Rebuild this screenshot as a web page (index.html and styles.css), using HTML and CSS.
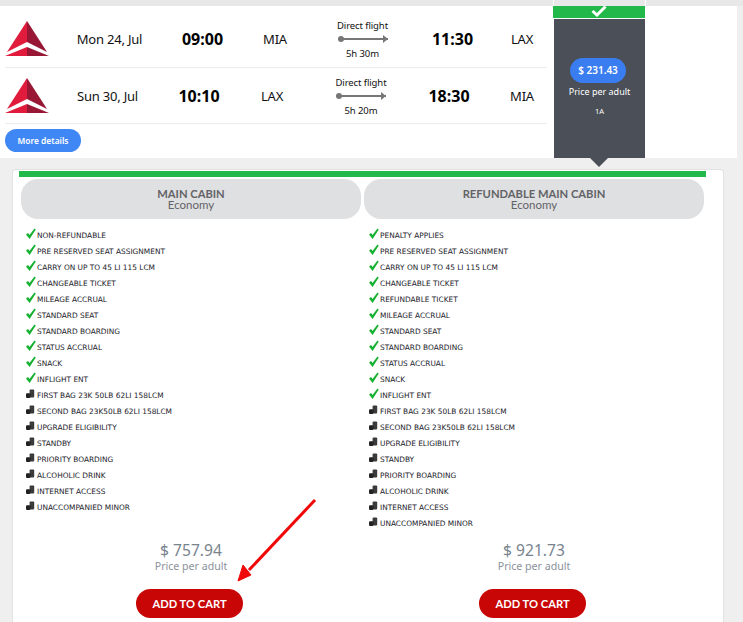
FILE: index.html
```html
<!DOCTYPE html>
<html lang="en">
<head>
    <meta charset="UTF-8">
    <meta name="viewport" content="width=device-width, initial-scale=1.0">
    <title>Select fare</title>
    <link rel="stylesheet" href="styles.css">
</head>
<body>
    <svg class="icon-defs" width="0" height="0">
        <symbol id="delta" viewBox="0 0 44 35">
            <path d="M22 0 L22 21 L2 31 Z" fill="#e01b3c"/>
            <path d="M22 0 L22 21 L42 31 Z" fill="#981735"/>
            <path d="M22 26 L22 35 L0 35 Z" fill="#e01b3c"/>
            <path d="M22 26 L22 35 L44 35 Z" fill="#981735"/>
        </symbol>
        <symbol id="check" viewBox="0 0 11 12">
            <path d="M1 6.5 L3 5 L4.5 7 L9.5 0.5 L10.8 1.6 L4.6 11 Z" fill="#14b02f"/>
        </symbol>
        <symbol id="bag" viewBox="0 0 11 12">
            <rect x="4.6" y="1.5" width="4.6" height="8" rx="1" fill="#3a3a3a"/>
            <rect x="1" y="5.2" width="4.4" height="4.8" rx="1" fill="#222"/>
        </symbol>
    </svg>

    <div class="top-strip"></div>

    <section class="results">
        <div class="flights">
            <div class="flight-row">
                <svg class="airline-logo"><use href="#delta"/></svg>
                <span class="flight-date">Mon 24, Jul</span>
                <strong class="flight-time">09:00</strong>
                <span class="flight-airport">MIA</span>
                <div class="flight-route">
                    <span>Direct flight</span>
                    <div class="route-line"></div>
                    <span>5h 30m</span>
                </div>
                <strong class="flight-time">11:30</strong>
                <span class="flight-airport last">LAX</span>
            </div>
            <div class="flight-row short">
                <svg class="airline-logo"><use href="#delta"/></svg>
                <span class="flight-date">Sun 30, Jul</span>
                <strong class="flight-time">10:10</strong>
                <span class="flight-airport">LAX</span>
                <div class="flight-route">
                    <span>Direct flight</span>
                    <div class="route-line"></div>
                    <span>5h 20m</span>
                </div>
                <strong class="flight-time">18:30</strong>
                <span class="flight-airport last">MIA</span>
            </div>
            <a href="#" class="details-btn">More details</a>
        </div>

        <div class="price-col">
            <div class="price-check">
                <svg width="16" height="12" viewBox="0 0 16 12"><path d="M1.5 6 L6 10 L14.5 1.5" fill="none" stroke="#fff" stroke-width="3"/></svg>
            </div>
            <div class="price-body">
                <span class="price-pill">$ 231.43</span>
                <span class="price-note">Price per adult</span>
                <span class="price-class">1A</span>
            </div>
        </div>
    </section>

    <section class="fares-card">
        <div class="fares-bar"></div>
        <div class="fares">
            <div class="fare">
                <div class="fare-head"><b>MAIN CABIN</b><span>Economy</span></div>
                <ul class="fare-list">
                    <li><svg><use href="#check"/></svg>NON-REFUNDABLE</li>
                    <li><svg><use href="#check"/></svg>PRE RESERVED SEAT ASSIGNMENT</li>
                    <li><svg><use href="#check"/></svg>CARRY ON UP TO 45 LI 115 LCM</li>
                    <li><svg><use href="#check"/></svg>CHANGEABLE TICKET</li>
                    <li><svg><use href="#check"/></svg>MILEAGE ACCRUAL</li>
                    <li><svg><use href="#check"/></svg>STANDARD SEAT</li>
                    <li><svg><use href="#check"/></svg>STANDARD BOARDING</li>
                    <li><svg><use href="#check"/></svg>STATUS ACCRUAL</li>
                    <li><svg><use href="#check"/></svg>SNACK</li>
                    <li><svg><use href="#check"/></svg>INFLIGHT ENT</li>
                    <li><svg><use href="#bag"/></svg>FIRST BAG 23K 50LB 62LI 158LCM</li>
                    <li><svg><use href="#bag"/></svg>SECOND BAG 23K50LB 62LI 158LCM</li>
                    <li><svg><use href="#bag"/></svg>UPGRADE ELIGIBILITY</li>
                    <li><svg><use href="#bag"/></svg>STANDBY</li>
                    <li><svg><use href="#bag"/></svg>PRIORITY BOARDING</li>
                    <li><svg><use href="#bag"/></svg>ALCOHOLIC DRINK</li>
                    <li><svg><use href="#bag"/></svg>INTERNET ACCESS</li>
                    <li><svg><use href="#bag"/></svg>UNACCOMPANIED MINOR</li>
                </ul>
                <div class="fare-price">$ 757.94</div>
                <div class="fare-note">Price per adult</div>
                <button class="cart-btn">ADD TO CART</button>
            </div>
            <div class="fare">
                <div class="fare-head"><b>REFUNDABLE MAIN CABIN</b><span>Economy</span></div>
                <ul class="fare-list">
                    <li><svg><use href="#check"/></svg>PENALTY APPLIES</li>
                    <li><svg><use href="#check"/></svg>PRE RESERVED SEAT ASSIGNMENT</li>
                    <li><svg><use href="#check"/></svg>CARRY ON UP TO 45 LI 115 LCM</li>
                    <li><svg><use href="#check"/></svg>CHANGEABLE TICKET</li>
                    <li><svg><use href="#check"/></svg>REFUNDABLE TICKET</li>
                    <li><svg><use href="#check"/></svg>MILEAGE ACCRUAL</li>
                    <li><svg><use href="#check"/></svg>STANDARD SEAT</li>
                    <li><svg><use href="#check"/></svg>STANDARD BOARDING</li>
                    <li><svg><use href="#check"/></svg>STATUS ACCRUAL</li>
                    <li><svg><use href="#check"/></svg>SNACK</li>
                    <li><svg><use href="#check"/></svg>INFLIGHT ENT</li>
                    <li><svg><use href="#bag"/></svg>FIRST BAG 23K 50LB 62LI 158LCM</li>
                    <li><svg><use href="#bag"/></svg>SECOND BAG 23K50LB 62LI 158LCM</li>
                    <li><svg><use href="#bag"/></svg>UPGRADE ELIGIBILITY</li>
                    <li><svg><use href="#bag"/></svg>STANDBY</li>
                    <li><svg><use href="#bag"/></svg>PRIORITY BOARDING</li>
                    <li><svg><use href="#bag"/></svg>ALCOHOLIC DRINK</li>
                    <li><svg><use href="#bag"/></svg>INTERNET ACCESS</li>
                    <li><svg><use href="#bag"/></svg>UNACCOMPANIED MINOR</li>
                </ul>
                <div class="fare-price">$ 921.73</div>
                <div class="fare-note">Price per adult</div>
                <button class="cart-btn">ADD TO CART</button>
            </div>
        </div>
    </section>

    <!-- annotation drawn over the screenshot -->
    <svg class="annotation" width="100" height="100" viewBox="0 0 100 100">
        <path d="M85 2 L19 72" stroke="#f00808" stroke-width="3" fill="none"/>
        <path d="M8 83 L13 67 L21 77 Z" fill="#f00808" stroke="#f00808" stroke-width="1"/>
    </svg>
</body>
</html>
```

FILE: styles.css
```css
* {
    margin: 0;
    padding: 0;
    box-sizing: border-box;
}

html, body {
    height: 622px;
    overflow: hidden;
}

body {
    position: relative;
    background: #efefef;
    font-family: 'Noto Sans', sans-serif;
    color: #111;
}

.icon-defs {
    position: absolute;
}

.top-strip {
    height: 6px;
    margin-bottom: -6px;
    background: #e8e8e8;
}

.results {
    display: flex;
    align-items: flex-start;
    width: 737px;
    height: 152px;
    margin-top: 6px;
    padding-left: 5px;
    background: #fff;
}

.flights {
    width: 542px;
}

.flight-row {
    display: grid;
    grid-template-columns: 57px 95px 91px 54px 121px 59px 1fr;
    align-items: center;
    height: 62px;
    padding-top: 4px;
    border-bottom: 1px solid #ececec;
    text-align: center;
    font-size: 13px;
    letter-spacing: -0.2px;
}

.flight-row.short {
    grid-template-columns: 57px 91px 92px 54px 124px 52px 1fr;
    height: 56px;
    padding-top: 0;
}

.airline-logo {
    width: 44px;
    height: 35px;
}

.flight-time {
    font-size: 16px;
    font-weight: 700;
    letter-spacing: 0;
    color: #000;
}

.flight-airport.last {
    padding-left: 15px;
}

.short .flight-airport.last {
    padding-left: 22px;
}

.flight-route {
    display: flex;
    flex-direction: column;
    align-items: center;
    gap: 5px;
    font-size: 9.5px;
    letter-spacing: -0.1px;
    line-height: 14px;
}

.flight-route span:last-child {
    margin: 2px 0 -2px;
}

.route-line {
    position: relative;
    width: 50px;
    height: 2px;
    background: #777;
}

.route-line::before {
    content: "";
    position: absolute;
    left: 0;
    top: -2px;
    width: 6px;
    height: 6px;
    border-radius: 50%;
    background: #777;
}

.route-line::after {
    content: "";
    position: absolute;
    right: 0;
    top: -3px;
    border-left: 5px solid #777;
    border-top: 4px solid transparent;
    border-bottom: 4px solid transparent;
}

.details-btn {
    display: inline-block;
    width: 76px;
    height: 23px;
    margin-top: 5px;
    border-radius: 12px;
    background: #3f87f5;
    color: #fff;
    font-size: 8.4px;
    font-weight: 600;
    line-height: 23px;
    text-align: center;
    text-decoration: none;
}

.price-col {
    position: relative;
    width: 93px;
    height: 158px;
    margin: -6px 0 0 6px;
    padding-top: 6px;
    border-left: 1px solid #fff;
    border-right: 1px solid #fff;
}

.price-check {
    display: flex;
    justify-content: center;
    height: 12px;
    margin: 0 0 1px -1px;
    background: #22b84a;
    line-height: 0;
}

.price-check svg {
    margin-top: -1px;
}

.price-body {
    display: flex;
    flex-direction: column;
    align-items: center;
    height: 139px;
    padding-top: 39px;
    background: #4b4f57;
    color: #fff;
}

.price-body::after {
    content: "";
    position: absolute;
    left: 36px;
    bottom: -9px;
    border-top: 9px solid #4b4f57;
    border-left: 9px solid transparent;
    border-right: 9px solid transparent;
}

.price-pill {
    width: 56px;
    height: 25px;
    margin-left: -3px;
    border-radius: 13px;
    background: #3a7df0;
    font-size: 10px;
    font-weight: 600;
    line-height: 25px;
    text-align: center;
}

.price-note {
    margin-top: 2px;
    font-size: 9px;
    line-height: 14px;
}

.price-class {
    margin-top: 6px;
    font-size: 7.5px;
    line-height: 12px;
}

.fares-card {
    width: 712px;
    height: 453px;
    margin: 11px 0 0 12px;
    padding: 1px 0 0 6px;
    background: #fff;
    border: 1px solid #e2e2e2;
    border-bottom: none;
    border-radius: 4px 4px 0 0;
}

.fares-bar {
    width: 687px;
    height: 6px;
    background: #22b84a;
}

.fares {
    display: grid;
    grid-template-columns: 340px 340px;
    gap: 3px;
    margin: 2px 0 0 2px;
    height: 439px;
}

.fare {
    display: flex;
    flex-direction: column;
    align-items: center;
}

.fare-head {
    display: flex;
    flex-direction: column;
    align-items: center;
    width: 100%;
    height: 40px;
    padding-top: 9px;
    border-radius: 17px;
    background: #dfe0e2;
    color: #636367;
    font-family: 'Lato', sans-serif;
    font-size: 11.5px;
    line-height: 11px;
}

.fare-head b {
    font-size: 11.2px;
    font-weight: 700;
}

.fare-list {
    flex: 1;
    align-self: stretch;
    margin-top: 8px;
    padding-left: 4px;
    list-style: none;
}

.fare-list li {
    display: flex;
    align-items: center;
    gap: 1px;
    height: 16px;
    font-family: 'DejaVu Sans', sans-serif;
    font-size: 7.4px;
    color: #1a1a2a;
}

.fare-list svg {
    flex: none;
    width: 11px;
    height: 12px;
    margin-top: -3px;
}

.fare-price {
    color: #78838e;
    font-size: 15.6px;
    line-height: 20px;
}

.fare-note {
    color: #8a929c;
    font-size: 10.6px;
    line-height: 12px;
}

.cart-btn {
    width: 107px;
    height: 29px;
    margin: 17px 3px 0 0;
    border: none;
    border-radius: 15px;
    background: #c80606;
    color: #fff;
    font-family: 'Lato', sans-serif;
    font-size: 11.2px;
    font-weight: 700;
}

.annotation {
    position: absolute;
    left: 230px;
    top: 498px;
}
```
